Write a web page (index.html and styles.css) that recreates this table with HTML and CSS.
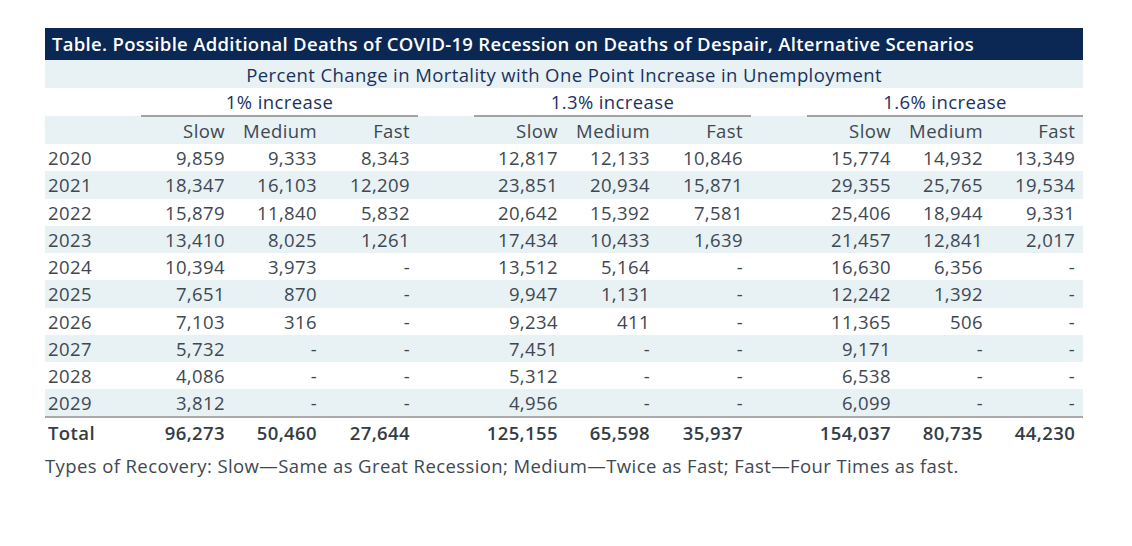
FILE: index.html
```html
<!DOCTYPE html>
<html>
<head>
<meta charset="utf-8">
<link rel="stylesheet" href="styles.css">
</head>
<body>
<div class="wrap">
  <div class="title">Table. Possible Additional Deaths of COVID-19 Recession on Deaths of Despair, Alternative Scenarios</div>
  <table class="tbl">
    <colgroup>
      <col class="c-year">
      <col class="c-num"><col class="c-num"><col class="c-num3">
      <col class="c-gap">
      <col class="c-num"><col class="c-num"><col class="c-num3">
      <col class="c-gap">
      <col class="c-num"><col class="c-num"><col class="c-num">
    </colgroup>
    <thead>
      <tr class="alt hrow">
        <th colspan="12" class="super">Percent Change in Mortality with One Point Increase in Unemployment</th>
      </tr>
      <tr class="hrow">
        <th></th>
        <th colspan="3" class="grp">1% increase</th>
        <th></th>
        <th colspan="3" class="grp">1.3% increase</th>
        <th></th>
        <th colspan="3" class="grp">1.6% increase</th>
      </tr>
      <tr class="alt hrow sub">
        <th></th>
        <th>Slow</th><th>Medium</th><th>Fast</th>
        <th></th>
        <th>Slow</th><th>Medium</th><th>Fast</th>
        <th></th>
        <th>Slow</th><th>Medium</th><th>Fast</th>
      </tr>
    </thead>
    <tbody>
      <tr><td class="yr">2020</td><td>9,859</td><td>9,333</td><td>8,343</td><td></td><td>12,817</td><td>12,133</td><td>10,846</td><td></td><td>15,774</td><td>14,932</td><td>13,349</td></tr>
      <tr class="alt"><td class="yr">2021</td><td>18,347</td><td>16,103</td><td>12,209</td><td></td><td>23,851</td><td>20,934</td><td>15,871</td><td></td><td>29,355</td><td>25,765</td><td>19,534</td></tr>
      <tr><td class="yr">2022</td><td>15,879</td><td>11,840</td><td>5,832</td><td></td><td>20,642</td><td>15,392</td><td>7,581</td><td></td><td>25,406</td><td>18,944</td><td>9,331</td></tr>
      <tr class="alt"><td class="yr">2023</td><td>13,410</td><td>8,025</td><td>1,261</td><td></td><td>17,434</td><td>10,433</td><td>1,639</td><td></td><td>21,457</td><td>12,841</td><td>2,017</td></tr>
      <tr><td class="yr">2024</td><td>10,394</td><td>3,973</td><td>-</td><td></td><td>13,512</td><td>5,164</td><td>-</td><td></td><td>16,630</td><td>6,356</td><td>-</td></tr>
      <tr class="alt"><td class="yr">2025</td><td>7,651</td><td>870</td><td>-</td><td></td><td>9,947</td><td>1,131</td><td>-</td><td></td><td>12,242</td><td>1,392</td><td>-</td></tr>
      <tr><td class="yr">2026</td><td>7,103</td><td>316</td><td>-</td><td></td><td>9,234</td><td>411</td><td>-</td><td></td><td>11,365</td><td>506</td><td>-</td></tr>
      <tr class="alt"><td class="yr">2027</td><td>5,732</td><td>-</td><td>-</td><td></td><td>7,451</td><td>-</td><td>-</td><td></td><td>9,171</td><td>-</td><td>-</td></tr>
      <tr><td class="yr">2028</td><td>4,086</td><td>-</td><td>-</td><td></td><td>5,312</td><td>-</td><td>-</td><td></td><td>6,538</td><td>-</td><td>-</td></tr>
      <tr class="alt"><td class="yr">2029</td><td>3,812</td><td>-</td><td>-</td><td></td><td>4,956</td><td>-</td><td>-</td><td></td><td>6,099</td><td>-</td><td>-</td></tr>
      <tr class="total"><td class="yr">Total</td><td>96,273</td><td>50,460</td><td>27,644</td><td></td><td>125,155</td><td>65,598</td><td>35,937</td><td></td><td>154,037</td><td>80,735</td><td>44,230</td></tr>
    </tbody>
  </table>
  <p class="note">Types of Recovery: Slow—Same as Great Recession; Medium—Twice as Fast; Fast—Four Times as fast.</p>
</div>
</body>
</html>
```

FILE: styles.css
```css
* { box-sizing: border-box; }
html, body { margin: 0; padding: 0; background: #ffffff; }
body {
  font-family: "Open Sans", "Lato", "Liberation Sans", sans-serif;
  color: #3e4852;
}
.wrap {
  padding: 28px 0 0 45px;
  width: 1083px;
}
.title {
  background: #0b2754;
  color: #ffffff;
  height: 32px;
  line-height: 32px;
  padding-left: 7px;
  font-size: 18.5px;
  font-weight: 600;
  letter-spacing: 0.3px;
}
.tbl {
  border-collapse: collapse;
  table-layout: fixed;
  width: 1038px;
  font-size: 18.5px;
  letter-spacing: 0.4px;
}
.c-year { width: 96px; }
.c-num { width: 92px; }
.c-num3 { width: 93px; }
.c-gap { width: 56px; }
.tbl th, .tbl td {
  padding: 0 8px 0 0;
  text-align: right;
  font-weight: 400;
  white-space: nowrap;
  height: 27.25px;
  line-height: 27px;
}
.tbl tr.hrow th { height: 28px; }
.tbl tr.alt { background: #e8f1f3; }
.tbl th.super {
  text-align: center;
  color: #1a315f;
  padding: 0;
}
.tbl th.grp {
  text-align: center;
  color: #1a315f;
  padding: 0;
  border-bottom: 2px solid #a3a3a3;
}
.tbl tr.sub th { color: #3e4852; }
.tbl td.yr {
  text-align: left;
  padding-left: 3px;
}
.tbl tr.total td {
  font-weight: 600;
  color: #333c45;
  border-top: 2px solid #a9a9a9;
  height: 30px;
}
.note {
  margin: 6px 0 0 0;
  font-size: 18.5px;
  letter-spacing: 0.4px;
  font-weight: 400;
  color: #3e4852;
}
```
